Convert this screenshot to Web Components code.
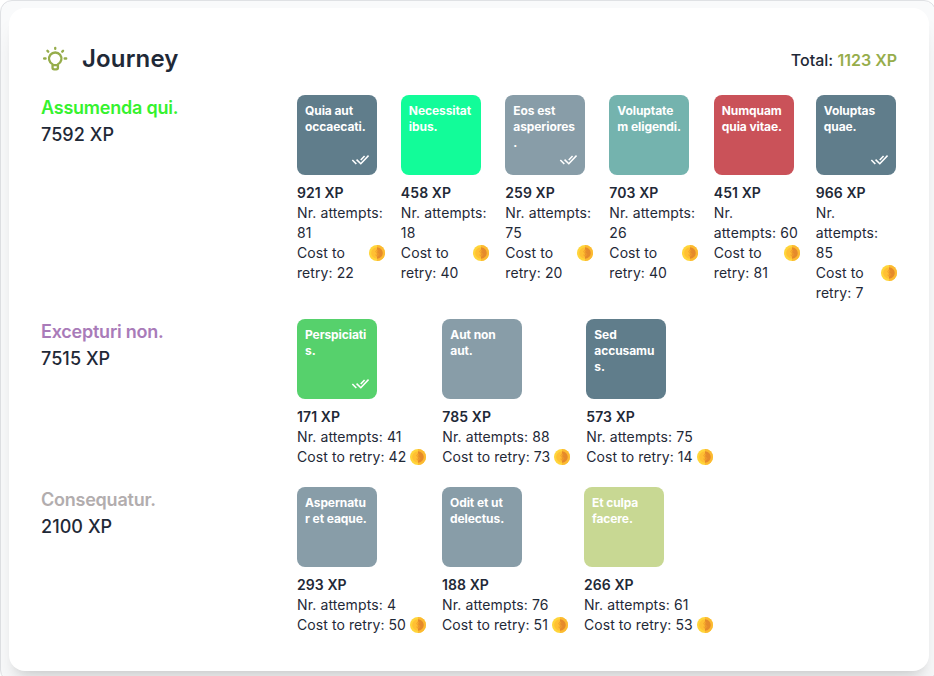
<!DOCTYPE html>
<html lang="en"><head><meta charset="utf-8"><title>Journey</title>
<style>
html,body{margin:0;height:676px;overflow:hidden;background:#fff}
body{font-family:Inter,"Liberation Sans",sans-serif;color:#1f2937}
</style></head><body>
<journey-panel></journey-panel>
<script>
const make=(name,html,fill)=>customElements.define(name,class extends HTMLElement{
  connectedCallback(){
    if(this.shadowRoot)return;
    const t=document.createElement('template');t.innerHTML=html;
    const r=this.attachShadow({mode:'open'});
    r.append(t.content.cloneNode(true));
    if(fill)fill(this,r);
  }
});

make('bulb-icon',`<style>:host{display:block;width:28px;height:28px;color:#96ad4b}svg{display:block}</style>
<svg width="28" height="28" viewBox="0 0 24 24" fill="none" stroke="currentColor" stroke-width="2" stroke-linecap="round" stroke-linejoin="round"><path d="M12.200 2.400v.9M2.700 11.600h1.200M20.300 11.600h1.300M5.500 5l.7.7M18.900 5l-.7.7"/><path d="M9.900 16.500v3a1.400 1.400 0 0 0 1.400 1.400h1.800a1.400 1.400 0 0 0 1.400-1.400v-3a5.300 5.300 0 1 0-4.600 0zM9.900 17.300h4.600"/></svg>`);

make('check-icon',`<style>:host{display:block;width:18px;height:18px}svg{display:block}</style>
<svg width="18" height="18" viewBox="0 0 24 24" fill="none" stroke="#fff" stroke-width="2.100"><path d="M1.800 12 7.100 17.300M7.400 11.500 13.100 17 23.400 6.200M13 12 18.100 6.600"/></svg>`);

make('gold-coin',`<style>:host{display:block;flex:none;width:16px;height:24px;padding-top:2px;box-sizing:border-box}svg{display:block}</style>
<svg width="16" height="16" viewBox="0 0 16 16"><circle cx="8" cy="8" r="8" fill="#ffd53a"/><path d="M8 0a8 8 0 0 1 0 16z" fill="#fcb932"/><circle cx="8" cy="8" r="5.800" fill="#ffc033"/><path d="M8 2.200a5.800 5.800 0 0 1 0 11.600z" fill="#e58a2b"/><path d="M9.600 6.300C9.100 5 6.700 5.100 6.600 6.600c0 1.700 3.100 1 3.100 2.900 0 1.500-2.800 1.700-3.400.300M8 4.300v7.400" fill="none" stroke="#f2a02b" stroke-width=".9"/></svg>`);

make('quest-item',`<style>
:host{display:block;font-size:14px;line-height:20px;letter-spacing:.075px}
.tile{width:80px;height:80px;box-sizing:border-box;border-radius:8px;padding:8px;margin-bottom:8px;display:flex;flex-direction:column;justify-content:space-between;color:#fff;font-weight:700;font-size:12px;line-height:16px;letter-spacing:-.08px}
.tile span{overflow-wrap:anywhere}
check-icon{align-self:flex-end;margin:0 0 -2px}
.xp{font-weight:600}
.tries{letter-spacing:.12px;white-space:pre-line}
.cost{display:flex;gap:4px;justify-content:space-between}
</style><div class="tile"><span><slot></slot></span></div><div class="xp"></div><div class="tries"></div><div class="cost"><span></span><gold-coin></gold-coin></div>`,(h,r)=>{
  const tile=r.querySelector('.tile');tile.style.background=h.getAttribute('color');
  if(h.hasAttribute('done'))tile.append(document.createElement('check-icon'));
  r.querySelector('.xp').textContent=h.getAttribute('xp')+' XP';
  r.querySelector('.tries').textContent='Nr.'+(h.hasAttribute('together')?'\n':' ')+'attempts: '+h.getAttribute('tries');
  r.querySelector('.cost span').textContent='Cost to retry: '+h.getAttribute('cost');
});

make('journey-row',`<style>
:host{display:grid;grid-template-columns:240px 600px;gap:16px}
.head{font-size:18px;line-height:27px;font-weight:500;color:#1f2937;margin-top:-1px;letter-spacing:.06px}
.name{font-weight:600;letter-spacing:-.23px}
.items{display:flex;gap:16px}
</style><div class="head"><div class="name"></div><div class="xp"></div></div><div class="items"><slot></slot></div>`,(h,r)=>{
  const n=r.querySelector('.name');n.textContent=h.getAttribute('name');n.style.color=h.getAttribute('color');
  r.querySelector('.xp').textContent=h.getAttribute('xp')+' XP';
});

make('journey-panel',`<style>
:host{display:block;box-sizing:border-box;width:936px;height:682px;border:1px solid #dfe1e4;border-radius:12px;background:#f9fafb;padding:7px 7px 0 8px}
.card{box-sizing:border-box;width:920px;height:663px;background:#fff;border-radius:16px;padding:33px 32px 32px;box-shadow:0 20px 25px -5px rgba(0,0,0,.1),0 8px 10px -6px rgba(0,0,0,.1)}
header{display:flex;align-items:center;height:36px;margin-bottom:18px}
h1{margin:0 auto 0 13px;font-size:24px;line-height:36px;font-weight:600;letter-spacing:.15px}
.total{font-size:16px;line-height:24px;font-weight:500;padding-top:2px}
.total b{font-weight:600;color:#96ad4b}
.rows{display:flex;flex-direction:column;gap:16px}
.last{flex-shrink:1.009}
</style>
<div class="card"><header><bulb-icon></bulb-icon><h1>Journey</h1><div class="total">Total: <b>1123 XP</b></div></header>
<div class="rows">
<journey-row name="Assumenda qui." xp="7592" color="#35f22e">
<quest-item color="#607d8b" xp="921" tries="81" cost="22" done>Quia aut occaecati.</quest-item>
<quest-item color="#12fc99" xp="458" tries="18" cost="40">Necessitatibus.</quest-item>
<quest-item color="#889da8" xp="259" tries="75" cost="20" done>Eos est asperiores.</quest-item>
<quest-item color="#74b3ae" xp="703" tries="26" cost="40">Voluptatem eligendi.</quest-item>
<quest-item together color="#ca5259" xp="451" tries="60" cost="81">Numquam quia vitae.</quest-item>
<quest-item class="last" color="#607d8b" xp="966" tries="85" cost="7" done>Voluptas quae.</quest-item>
</journey-row>
<journey-row name="Excepturi non." xp="7515" color="#a97bb9">
<quest-item color="#56d16c" xp="171" tries="41" cost="42" done>Perspiciatis.</quest-item>
<quest-item color="#889da8" xp="785" tries="88" cost="73">Aut non aut.</quest-item>
<quest-item color="#607d8b" xp="573" tries="75" cost="14">Sed accusamus.</quest-item>
</journey-row>
<journey-row name="Consequatur." xp="2100" color="#b2adae">
<quest-item color="#889da8" xp="293" tries="4" cost="50">Aspernatur et eaque.</quest-item>
<quest-item color="#889da8" xp="188" tries="76" cost="51">Odit et ut delectus.</quest-item>
<quest-item color="#c8d893" xp="266" tries="61" cost="53">Et culpa facere.</quest-item>
</journey-row>
</div></div>`);
</script></body></html>
